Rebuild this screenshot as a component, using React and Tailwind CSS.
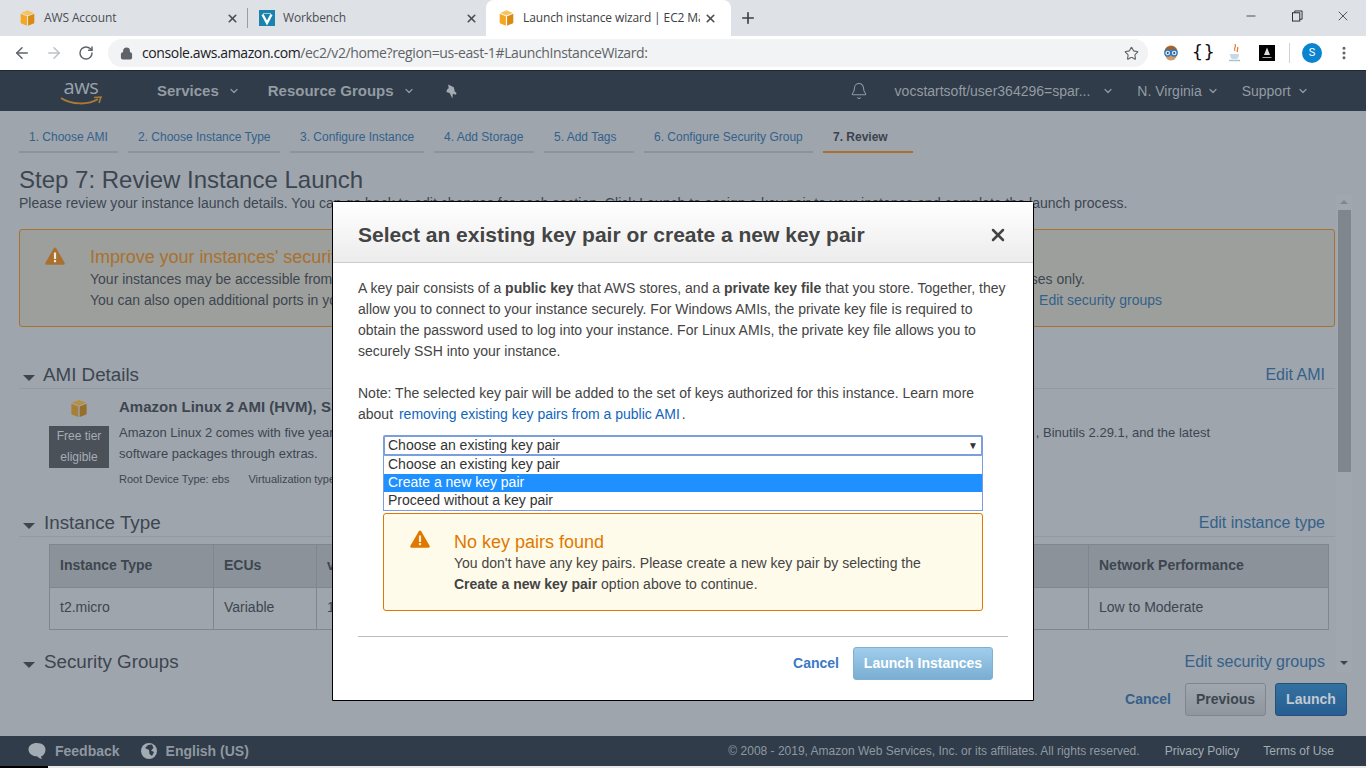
import { Bell, ChevronDown, Lock, Star, RotateCw, ArrowLeft, ArrowRight, Plus, X, Minus, EllipsisVertical } from "lucide-react";

const arial = "font-['Liberation_Sans',Arial,sans-serif]";

function Cube({ className, color = "#f5a623", dark = "#d98a10", top = "#f9c25a" }) {
  return (
    <svg viewBox="0 0 20 20" className={className}>
      <path d="M10 1 17.5 4 10 7 2.5 4Z" fill={top} />
      <path d="M2 5 9.3 8v11L3 16.6C2.4 16.4 2 15.8 2 15.2Z" fill={color} />
      <path d="M18 5 10.7 8v11l6.3-2.4c.6-.2 1-.8 1-1.4Z" fill={dark} />
    </svg>
  );
}

function Warn({ className, color }) {
  return (
    <svg viewBox="0 0 20 18" className={className}>
      <path d="M10 0.5c.5 0 1 .3 1.2.7l8.4 14.6c.5.9-.1 1.9-1.1 1.9H1.5c-1 0-1.6-1-1.1-1.9L8.8 1.2C9 .8 9.5.5 10 .5Z" fill={color} />
      <rect x="8.9" y="5.5" width="2.2" height="6.5" fill="#fff" fillOpacity="0.85" />
      <rect x="8.9" y="13" width="2.2" height="2.2" fill="#fff" fillOpacity="0.85" />
    </svg>
  );
}

function Tab({ icon, label, width, active }) {
  if (active) {
    return (
      <div className="flex items-center h-[36px] bg-white rounded-t-lg pl-[13px] pr-[14px] w-[245px]">
        {icon}
        <span className="ml-[8px] flex-1 text-[12px] tracking-[-0.12px] text-[#3c4043] whitespace-nowrap overflow-hidden font-['Open_Sans',sans-serif]">{label}</span>
        <X size={13} strokeWidth={3} className="text-[#4a4d51] ml-1" />
      </div>
    );
  }
  return (
    <div className="flex items-center h-[36px]" style={{ width }}>
      {icon}
      <span className="ml-[8px] flex-1 text-[12px] tracking-[-0.12px] text-[#4b4e52] whitespace-nowrap font-['Open_Sans',sans-serif]">{label}</span>
      <X size={13} strokeWidth={3} className="text-[#4a4d51]" />
    </div>
  );
}

function BrowserChrome() {
  return (
    <div className="shrink-0">
      <div className="h-[36px] bg-[#dee1e6] flex items-center">
        <div className="flex items-center w-[486px]">
          <div className="pl-[19px] pr-[8px] w-[247px]">
            <Tab icon={<Cube className="w-[17px] h-[18px]" />} label="AWS Account" width={220} />
          </div>
          <div className="w-px h-[20px] bg-[#9a9da1]" />
          <div className="pl-[11px] pr-[8px] w-[238px]">
            <Tab
              icon={
                <svg viewBox="0 0 16 16" className="w-[16px] h-[16px]">
                  <rect width="16" height="16" fill="#1a82ad" />
                  <path d="M3.500 4.500 8 13l4.500-8.500" stroke="#fff" strokeWidth="2.400" fill="none" />
                  <path d="M4 3.500h8" stroke="#bfe0ee" strokeWidth="0.800" />
                </svg>
              }
              label="Workbench"
              width={219}
            />
          </div>
        </div>
        <Tab active icon={<Cube className="w-[17px] h-[18px] -ml-[1px]" />} label="Launch instance wizard | EC2 Manag" />
        <Plus size={18} strokeWidth={2.2} className="ml-[8px] text-[#3c4043]" />
        <div className="ml-auto flex items-center h-full text-[#222]">
          <Minus size={14} strokeWidth={1.3} className="mr-[34px] -mt-[4px]" />
          <svg viewBox="0 0 12 12" className="w-[11px] h-[12px] mr-[32px] -mt-[4px]" fill="none" stroke="#222" strokeWidth="1">
            <rect x="0.5" y="2.5" width="8" height="9" fill="#dee1e6" />
            <path d="M3 2.500V.5h8v9H8.500" />
          </svg>
          <X size={16} strokeWidth={1.1} className="mr-[15px] -mt-[4px]" />
        </div>
      </div>
      <div className="h-[34px] bg-white flex items-center relative">
        <ArrowLeft size={18} strokeWidth={2} className="ml-[13px] text-[#5f6368]" />
        <ArrowRight size={18} strokeWidth={2} className="ml-[14px] text-[#bdc1c6]" />
        <RotateCw size={16} strokeWidth={2.2} className="ml-[15px] text-[#5f6368]" />
        <div className="ml-[14px] w-[1040px] h-[28px] bg-[#f1f3f4] rounded-full flex items-center">
          <Lock size={13} strokeWidth={2.6} fill="#5f6368" className="ml-[12px] text-[#5f6368]" />
          <span className="ml-[9px] -mt-[1px] text-[14px] whitespace-nowrap font-['Open_Sans',sans-serif] tracking-[-0.38px] text-[#5f6368]">
            <span className="text-[#202124]">console.aws.amazon.com</span>/ec2/v2/home?region=us-east-1#LaunchInstanceWizard:
          </span>
          <Star size={15} strokeWidth={1.8} className="ml-auto mr-[9px] text-[#5f6368]" />
        </div>
        <svg viewBox="0 0 18 18" className="w-[18px] h-[18px] ml-[14px]">
          <path d="M3 9c0-5 2.500-7.500 6-7.500S15 4 15 9c0 4-2 7.500-6 7.500S3 13 3 9Z" fill="#d59a66" />
          <path d="M2.500 8c0-8 13-8 13 0-3-2.500-10-2.500-13 0Z" fill="#a5612c" />
          <circle cx="5.800" cy="9" r="3" fill="#cfe7f7" stroke="#2b78c5" strokeWidth="1.300" />
          <circle cx="12.200" cy="9" r="3" fill="#cfe7f7" stroke="#2b78c5" strokeWidth="1.300" />
          <circle cx="5.800" cy="9" r="0.900" fill="#333" />
          <circle cx="12.200" cy="9" r="0.900" fill="#333" />
        </svg>
        <span className="ml-[12px] w-[20px] text-center text-[18px] font-normal text-[#111] font-['DejaVu_Sans_Mono',monospace] tracking-[1px] leading-none -mt-[2px] whitespace-nowrap">{"{}"}</span>
        <svg viewBox="0 0 16 20" className="w-[16px] h-[20px] ml-[15px]">
          <path d="M8 1c2 3-2 4 0 7M10.500 4c1 2-1 3 0 5" stroke="#e57b3a" strokeWidth="1.300" fill="none" />
          <path d="M3 11h9c0 3-1 4-2 5H5c-1-1-2-2-2-5Z" fill="#c7d8e6" />
          <path d="M2 17.500h11" stroke="#a9c0d4" strokeWidth="1.500" />
        </svg>
        <div className="ml-[16px] w-[16px] h-[16px] bg-black flex items-center justify-center">
          <svg viewBox="0 0 16 16" className="w-[16px] h-[16px]">
            <path d="M8 2.500 11 10H5Z" fill="#ddd" />
            <path d="M3.500 12.500h9" stroke="#aaa" strokeWidth="1" />
          </svg>
        </div>
        <div className="ml-[14px] w-px h-[20px] bg-[#d0d2d5]" />
        <div className="ml-[12px] w-[20px] h-[20px] rounded-full bg-[#0a84d0] text-white text-[11px] flex items-center justify-center font-['Roboto',sans-serif]">S</div>
        <EllipsisVertical size={16} strokeWidth={2.6} className="ml-[14px] text-[#5f6368]" />
      </div>
    </div>
  );
}

function NavItem({ children, className, chevronClass }) {
  return (
    <div className={`flex items-center whitespace-nowrap ${className}`}>
      {children}
      <ChevronDown size={12} strokeWidth={2.4} className={chevronClass} />
    </div>
  );
}

function AwsNav() {
  return (
    <div className="h-[41px] shrink-0 bg-[#303c49] border-t border-[#1f2933] flex items-center text-[#939ba3]">
      <div className="ml-[60px] w-[42px] h-[36px] relative flex justify-center">
        <span className="text-[20px] leading-[20px] mt-[4px] text-[#9aa3ab] font-['Open_Sans',sans-serif] tracking-[-0.4px]">aws</span>
        <svg viewBox="0 0 42 10" className="absolute left-0 bottom-[3px] w-[42px] h-[10px]">
          <path d="M1 2c10 7 28 7 37 1" stroke="#a87b35" strokeWidth="2" fill="none" />
          <path d="M34 1.500 41 1 39 7" stroke="#a87b35" strokeWidth="1.600" fill="none" />
        </svg>
      </div>
      <NavItem className="ml-[55px] text-[15px] font-bold" chevronClass="ml-[9px]">Services</NavItem>
      <NavItem className="ml-[28px] text-[15px] font-bold" chevronClass="ml-[9px]">Resource Groups</NavItem>
      <svg viewBox="0 0 14 16" className="w-[14px] h-[15px] ml-[29px]">
        <path d="M4 .5 10 3.500l1 4.500 2 1.500-1 2-3-1L8.500 15.500 5.500 9.500 2 8.500l1-3 1.500-1Z" fill="#a3abb3" />
      </svg>
      <Bell size={18} strokeWidth={1.4} className="ml-[392px]" />
      <NavItem className="ml-[27px] text-[14px]" chevronClass="ml-[12px]">vocstartsoft/user364296=spar...</NavItem>
      <NavItem className="ml-[23px] text-[14px]" chevronClass="ml-[5px]">N. Virginia</NavItem>
      <NavItem className="ml-[23px] text-[14px]" chevronClass="ml-[6px]">Support</NavItem>
    </div>
  );
}

const steps = [
  ["1. Choose AMI", "w-[99px]"],
  ["2. Choose Instance Type", "w-[152px]"],
  ["3. Configure Instance", "w-[134px]"],
  ["4. Add Storage", "w-[100px]"],
  ["5. Add Tags", "w-[90px]"],
  ["6. Configure Security Group", "w-[169px]"],
];

function Steps() {
  return (
    <div className="h-[42px] shrink-0 pl-[19px] flex gap-[10px] items-start pt-[1px] text-[12px]">
      {steps.map(([label, w]) => (
        <div key={label} className={`${w} h-[41px] pl-[10px] pt-[17px] leading-[17px] whitespace-nowrap text-[#34618a] border-b-2 border-[#8c939b]`}>
          {label}
        </div>
      ))}
      <div className="w-[90px] h-[41px] pl-[10px] pt-[17px] leading-[17px] font-bold text-[#3b444e] border-b-2 border-[#a8712f]">7. Review</div>
    </div>
  );
}

function SectionHead({ title, edit, className, titleClass = "ml-[9px]" }) {
  return (
    <div className={`flex items-end h-[27px] border-b border-[#929aa2] ${className}`}>
      <span className="ml-[4px] mb-[7px] w-0 h-0 border-x-[6px] border-x-transparent border-t-[6px] border-t-[#3d4650]" />
      <span className={`${titleClass} text-[18.8px] leading-[26px] text-[#3d4650]`}>{title}</span>
      <span className="ml-auto mr-[10px] text-[16px] leading-[26px] text-[#34618a]">{edit}</span>
    </div>
  );
}

function ReviewPage() {
  return (
    <div className="flex-1 min-h-0 flex flex-col">
      <div className="pl-[19px] h-[42px] shrink-0 text-[24px] leading-[28px] pt-[13px] text-[#3d4650]">Step 7: Review Instance Launch</div>
      <div className="flex-1 min-h-0 flex">
        <div className="w-[1336px] h-[477px] pl-[19px] pr-[1px] overflow-hidden">
          <p className="text-[14px] leading-[17px] tracking-[0.023px] text-[#3d4650] whitespace-nowrap">
            Please review your instance launch details. You can go back to edit changes for each section. Click Launch to assign a key pair to your instance and complete the launch process.
          </p>
          <div className="mt-[17px] h-[98px] border border-[#a8712f] rounded-[3px] bg-[#9d9f9c] flex">
            <Warn className="w-[20px] h-[18px] ml-[25px] mt-[17px]" color="#a8712f" />
            <div className="ml-[25px] flex-1 min-w-0">
              <div className="mt-[15px] text-[18px] tracking-[-0.05px] leading-[25px] text-[#a8712f] whitespace-nowrap">Improve your instances' security. Your security group, launch-wizard-1, is open to the world.</div>
              <div className="w-[995px] flex justify-between text-[14px] leading-[21px] -mt-px text-[#3d4650] whitespace-nowrap">
                <span>Your instances may be accessible from any IP address. We recommend that you</span>
                <span>addresses only.</span>
              </div>
              <div className="w-[1072px] flex justify-between text-[14px] leading-[21px] text-[#3d4650] whitespace-nowrap">
                <span>You can also open additional ports in your security group.</span>
                <span className="text-[#34618a]">Edit security groups</span>
              </div>
            </div>
          </div>

          <SectionHead title="AMI Details" edit="Edit AMI" className="mt-[35px]" titleClass="ml-[8px]" />
          <div className="flex h-[110px]">
            <div className="ml-[30px] w-[60px] flex flex-col items-center">
              <Cube className="w-[20px] h-[19px] mt-[10px]" color="#a87f34" dark="#94702c" top="#b8903f" />
              <div className="mt-[8px] w-[60px] h-[42px] bg-[#4a5159] text-center text-[12px] leading-[21px] text-[#a6adb4]">
                Free tier<br />eligible
              </div>
            </div>
            <div className="ml-[10px] flex-1 min-w-0">
              <div className="mt-[9px] text-[15px] leading-[17px] font-bold text-[#3d4650] whitespace-nowrap">Amazon Linux 2 AMI (HVM), SSD Volume Type</div>
              <div className="mt-[7px] flex justify-between w-[1091px] text-[13px] leading-[21px] text-[#3d4650] whitespace-nowrap">
                <span>Amazon Linux 2 comes with five years support.</span>
                <span>, Binutils 2.29.1, and the latest</span>
              </div>
              <div className="text-[13px] leading-[21px] text-[#3d4650]">software packages through extras.</div>
              <div className="mt-[8px] flex gap-[19px] text-[11px] leading-[14px] text-[#3d4650]">
                <span>Root Device Type: ebs</span>
                <span>Virtualization type: hvm</span>
              </div>
            </div>
          </div>

          <SectionHead title="Instance Type" edit="Edit instance type" className="mt-[11px]" titleClass="ml-[9px]" />
          <div className="ml-[30px] mt-[7px] w-[1280px] border border-[#7f868e] text-[14px]">
            <div className="grid grid-cols-[163px_103px_772px_1fr] h-[43px] bg-[#8b9299] font-bold text-[#3d4650] border-b border-[#7f868e]">
              <div className="pl-[10px] leading-[41px]">Instance Type</div>
              <div className="pl-[10px] leading-[41px] border-l border-[#7f868e]">ECUs</div>
              <div className="pl-[10px] leading-[41px] border-l border-[#7f868e]">vCPUs</div>
              <div className="pl-[10px] leading-[41px] border-l border-[#7f868e]">Network Performance</div>
            </div>
            <div className="grid grid-cols-[163px_103px_772px_1fr] h-[41px] text-[#3d4650]">
              <div className="pl-[10px] leading-[39px]">t2.micro</div>
              <div className="pl-[10px] leading-[39px] border-l border-[#7f868e]">Variable</div>
              <div className="pl-[10px] leading-[39px] border-l border-[#7f868e]">1</div>
              <div className="pl-[10px] leading-[39px] border-l border-[#7f868e]">Low to Moderate</div>
            </div>
          </div>
          <SectionHead title="Security Groups" edit="Edit security groups" className="mt-[19px]" titleClass="ml-[9px]" />
        </div>
        <div className="w-[16px] h-[477px] bg-[#a0a7af] flex flex-col items-center">
          <span className="mt-[5px] w-0 h-0 border-x-[4px] border-x-transparent border-b-[4px] border-b-[#7f868e]" />
          <div className="mt-[6px] w-[13px] h-[262px] bg-[#7f868e]" />
          <span className="mt-auto mb-[7px] w-0 h-0 border-x-[4px] border-x-transparent border-t-[4px] border-t-[#3d4650]" />
        </div>
      </div>
      <div className="h-[64px] shrink-0 flex items-start justify-end pt-[11px] pr-[19px] text-[14px] font-bold">
        <span className="mr-[14px] leading-[33px] text-[#34618a]">Cancel</span>
        <div className="w-[81px] h-[33px] rounded-[3px] border border-[#7f868e] bg-gradient-to-b from-[#a0a7af] to-[#8f969e] text-center leading-[31px] text-[#3d4650]">Previous</div>
        <div className="ml-[9px] w-[72px] h-[33px] rounded-[3px] border border-[#24507c] bg-gradient-to-b from-[#33719f] to-[#275d92] text-center leading-[31px] text-[#c3cad1]">Launch</div>
      </div>
    </div>
  );
}

function Footer() {
  return (
    <div className="shrink-0">
      <div className="h-[30px] bg-[#303c49] flex items-center text-[12px] text-[#8f98a1]">
        <svg viewBox="0 0 18 16" className="ml-[28px] w-[18px] h-[16px]">
          <path d="M9 0c5 0 8.500 2.800 8.500 6.500S15 13 13 13.500c0 1 .7 2 1.500 2.500-2 0-4-1-5-2.500-5 0-9-3-9-7S4 0 9 0Z" fill="#a3abb3" />
        </svg>
        <span className="ml-[9px] text-[14px] font-bold">Feedback</span>
        <svg viewBox="0 0 16 16" className="ml-[21px] w-[16px] h-[16px]">
          <circle cx="8" cy="8" r="8" fill="#a3abb3" />
          <path d="M7 2 11 1.500 12.500 5 10 7.500 13 9 11 13 8.500 11 8 7 4 5Z" fill="#303c49" />
        </svg>
        <span className="ml-[9px] text-[14px] font-bold">English (US)</span>
        <span className="ml-auto">© 2008 - 2019, Amazon Web Services, Inc. or its affiliates. All rights reserved.</span>
        <span className="ml-[25px] text-[#a3abb3]">Privacy Policy</span>
        <span className="ml-[24px] mr-[32px] text-[#a3abb3]">Terms of Use</span>
      </div>
      <div className="h-[2px] flex">
        <div className="w-[48px] bg-black" />
        <div className="flex-1 bg-[#e8e8e8]" />
      </div>
    </div>
  );
}

function KeyPairModal() {
  return (
    <div className="absolute left-[332px] top-[201px] w-[702px] h-[500px] bg-white border border-black rounded-t-[3px] text-[14px] text-[#444]">
      <div className="h-[61px] bg-gradient-to-b from-white to-[#ececec] border-b border-[#ccc] flex items-center pl-[25px] pr-[25px] pt-[6px]">
        <span className="text-[21px] font-bold text-[#444] whitespace-nowrap">Select an existing key pair or create a new key pair</span>
        <X size={20} strokeWidth={3} className="ml-auto text-[#444]" />
      </div>
      <div className="px-[25px] pt-[15px] leading-[21px]">
        <p>
          A key pair consists of a <b>public key</b> that AWS stores, and a <b>private key file</b> that you store. Together, they
          allow you to connect to your instance securely. For Windows AMIs, the private key file is required to
          obtain the password used to log into your instance. For Linux AMIs, the private key file allows you to
          securely SSH into your instance.
        </p>
        <p className="mt-[21px]">
          Note: The selected key pair will be added to the set of keys authorized for this instance. Learn more
          about <span className="ml-[2px] text-[#1166bb]">removing existing key pairs from a public AMI</span><span className="ml-[2px]">.</span>
        </p>
      </div>
      <div className="ml-[50px] mt-[10px] w-[600px]">
        <div className="h-[21px] border-2 border-[#7a9fdc] rounded-[2px] flex items-center pl-[3px] pr-[3px] leading-[17px] text-[#333]">
          Choose an existing key pair
          <span className="ml-auto text-[10px] text-[#333]">▼</span>
        </div>
        <div className="border border-t-0 border-[#7a9fdc] text-[#333] leading-[16px] pt-px -mt-px">
          <div className="h-[18px] pl-[4px]">Choose an existing key pair</div>
          <div className="h-[18px] pl-[4px] bg-[#1e90ff] text-white">Create a new key pair</div>
          <div className="h-[18px] pl-[4px]">Proceed without a key pair</div>
        </div>
        <div className="mt-[2px] h-[98px] border border-[#e07800] rounded-[3px] bg-[#fffbeb] flex">
          <Warn className="w-[20px] h-[18px] ml-[26px] mt-[16px]" color="#e07800" />
          <div className="ml-[24px]">
            <div className="mt-[16px] text-[18px] leading-[24px] text-[#e07800]">No key pairs found</div>
            <div className="-mt-px leading-[21px] text-[#444]">
              You don't have any key pairs. Please create a new key pair by selecting the
              <br />
              <b>Create a new key pair</b> option above to continue.
            </div>
          </div>
        </div>
      </div>
      <div className="mx-[25px] mt-[25px] border-t border-[#bbb]" />
      <div className="flex justify-end items-center mt-[10px] mr-[40px] font-bold">
        <span className="mr-[14px] text-[#3a78c8]">Cancel</span>
        <div className="w-[140px] h-[33px] rounded-[3px] border border-[#7fb0d2] bg-gradient-to-b from-[#a0cdec] to-[#79aed2] text-center leading-[31px] text-white">Launch Instances</div>
      </div>
    </div>
  );
}

function App() {
  return (
    <div className={`relative w-[1366px] h-[768px] overflow-hidden flex flex-col bg-[#9ea5ad] ${arial}`}>
      <BrowserChrome />
      <AwsNav />
      <Steps />
      <ReviewPage />
      <Footer />
      <KeyPairModal />
    </div>
  );
}

export default App;
